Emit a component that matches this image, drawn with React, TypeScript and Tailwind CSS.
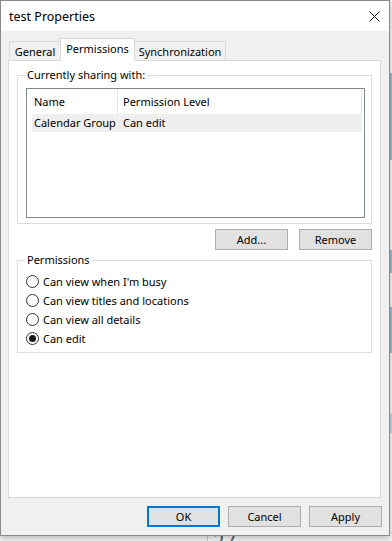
import React from "react";

function Btn({ label, primary }: { label: string; primary?: boolean }) {
  return (
    <div
      className={
        primary
          ? "flex h-[21px] w-[73px] items-center justify-center border-2 border-[#0078d7] bg-[#e1e1e1]"
          : "flex h-[21px] w-[73px] items-center justify-center border border-[#adadad] bg-[#e1e1e1]"
      }
    >
      {label}
    </div>
  );
}

function Radio({ label, checked }: { label: string; checked?: boolean }) {
  return (
    <div className="flex h-[19px] items-center">
      <div className="ml-[8px] flex h-[13px] w-[13px] items-center justify-center rounded-full border border-[#333333] bg-white">
        {checked && <div className="h-[7px] w-[7px] rounded-full bg-[#1a1a1a]" />}
      </div>
      <span className="ml-[4px]">{label}</span>
    </div>
  );
}

export default function App() {
  return (
    <div className="relative h-[541px] w-[392px] overflow-hidden whitespace-nowrap bg-[#f3f3f3] font-['Noto_Sans',sans-serif] text-[11px] leading-[16px] text-black">
      {/* desktop behind the dialog */}
      <div className="absolute right-0 top-0 flex h-full w-[2px] flex-col bg-[#f4f4f4]">
        <div className="h-[73px]" />
        <div className="h-[87px] bg-[#9fb8cc]" />
        <div className="h-[90px]" />
        <div className="h-[23px] bg-[#9fb8cc]" />
        <div className="h-[34px]" />
        <div className="h-[46px] bg-[#9fb8cc]" />
        <div className="h-[60px]" />
        <div className="h-[20px] bg-[#c3d3e0]" />
      </div>
      <div className="absolute left-[207px] top-[530px] h-[11px] w-px bg-[#c8c8c8]" />
      <div className="absolute left-[213px] top-[529px] text-[20px] leading-[24px] text-[#4d5966]">27</div>

      {/* dialog window */}
      <div className="relative z-10 flex h-[536px] w-[390px] flex-col border border-[#8a8a8a] bg-[#f0f0f0] shadow-[0_2px_6px_rgba(0,0,0,0.25)]">
        {/* title bar */}
        <div className="flex h-[30px] items-center justify-between bg-white pl-[8px] pr-[9px]">
          <span className="mt-[2px] text-[12.5px]">test Properties</span>
          <svg width="11" height="11" viewBox="0 0 11 11" className="mt-[1px]">
            <path d="M0.5 0.5 L10.5 10.5 M10.5 0.5 L0.5 10.5" stroke="#111" strokeWidth="1" fill="none" />
          </svg>
        </div>

        {/* tabs */}
        <div className="mt-[7px] flex h-[22px] items-end pl-[8px]">
          <div className="flex h-[19px] w-[51px] items-center justify-center border-l border-t border-[#d9d9d9] pt-[1px]">General</div>
          <div className="relative z-10 -mb-px flex h-[23px] w-[75px] items-start justify-center border-x border-t border-[#d9d9d9] bg-white pt-[2px]">
            Permissions
          </div>
          <div className="flex h-[19px] w-[91px] items-center justify-center border-r border-t border-[#d9d9d9] pt-[1px]">Synchronization</div>
        </div>

        {/* panel */}
        <div className="ml-[7px] flex h-[438px] w-[373px] flex-col border border-[#d9d9d9] bg-white">
          <fieldset className="ml-[8px] mt-[6px] w-[355px] border border-[#dcdcdc] px-0 pb-[5px]">
            <legend className="ml-[7px] px-[2px]">Currently sharing with:</legend>
            <div className="ml-[8px] mt-[5px] h-[130px] w-[339px] border border-[#828790] bg-white">
              <div className="flex h-[25px] items-center">
                <div className="flex h-full w-[91px] items-center border-r border-[#e5e5e5] pl-[7px]">Name</div>
                <div className="flex h-full w-[244px] items-center border-r border-[#e5e5e5] pl-[5px]">Permission Level</div>
              </div>
              <div className="ml-[5px] flex h-[18px] w-[330px] items-center bg-[#efefef]">
                <div className="w-[86px] pl-[2px]">Calendar Group</div>
                <div className="pl-[5px]">Can edit</div>
              </div>
            </div>
          </fieldset>

          <div className="mr-[8px] mt-[5px] flex justify-end gap-[11px]">
            <Btn label="Add..." />
            <Btn label="Remove" />
          </div>

          <fieldset className="ml-[8px] mt-[2px] w-[355px] border border-[#dcdcdc] px-0 pb-[4px]">
            <legend className="ml-[7px] px-[2px]">Permissions</legend>
            <div className="mt-[4px] flex flex-col">
              <Radio label="Can view when I'm busy" />
              <Radio label="Can view titles and locations" />
              <Radio label="Can view all details" />
              <Radio label="Can edit" checked />
            </div>
          </fieldset>
        </div>

        {/* bottom buttons */}
        <div className="mr-[7px] mt-[8px] flex justify-end gap-[8px]">
          <Btn label="OK" primary />
          <Btn label="Cancel" />
          <Btn label="Apply" />
        </div>
      </div>
    </div>
  );
}
